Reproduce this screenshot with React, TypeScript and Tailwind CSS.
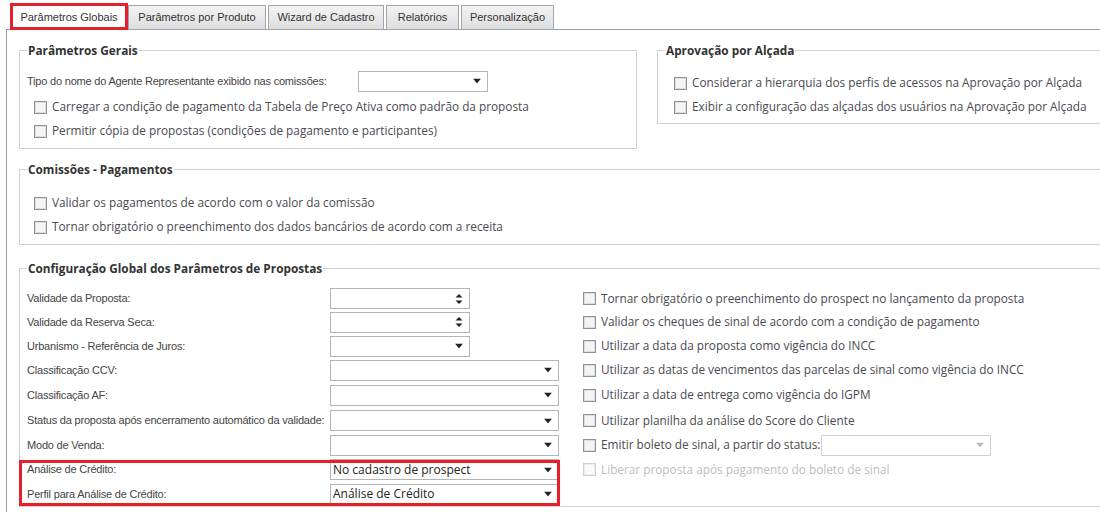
import React from "react";

const RED = "border-[#e5202a]";

const TABS = [
  { label: "Parâmetros Globais", w: "w-[114px]", active: true },
  { label: "Parâmetros por Produto", w: "w-[138px]" },
  { label: "Wizard de Cadastro", w: "w-[116px]" },
  { label: "Relatórios", w: "w-[73px]" },
  { label: "Personalização", w: "w-[93px]" },
];

function Box({ disabled }: { disabled?: boolean }) {
  return (
    <span
      className={
        "w-[13px] h-[13px] shrink-0 border " +
        (disabled
          ? "border-[#d0d0d0] bg-[#fafafa] shadow-[inset_0_0_0_1px_#ededed]"
          : "border-[#8f8f96] bg-[#f5f5f5] shadow-[inset_0_0_0_1px_#dedede]")
      }
    />
  );
}

function Check({
  label,
  disabled,
  children,
}: {
  label: string;
  disabled?: boolean;
  children?: React.ReactNode;
}) {
  return (
    <div className="flex items-center h-6">
      <Box disabled={disabled} />
      <span
        className={
          "ml-[5px] font-['Open_Sans',sans-serif] text-[11.8px] whitespace-nowrap " +
          (disabled ? "text-[#bdbdc2]" : "text-[#4a4a52]")
        }
      >
        {label}
      </span>
      {children}
    </div>
  );
}

function Arrow({ light }: { light?: boolean }) {
  return (
    <svg width="8" height="5" viewBox="0 0 8 5" className="absolute right-[6px] top-1/2 -translate-y-1/2">
      <path d="M0 0h8L4 5z" fill={light ? "#b8b8b8" : "#222"} />
    </svg>
  );
}

function Select({
  value,
  className,
  disabled,
}: {
  value?: string;
  className: string;
  disabled?: boolean;
}) {
  return (
    <div
      className={
        "relative h-[21px] bg-white border flex items-center pl-[2px] " +
        (disabled ? "border-[#d2d2d6] " : "border-[#b4b4bb] ") +
        className
      }
    >
      {value && (
        <span className="font-['Open_Sans',sans-serif] text-[12px] text-[#222]">{value}</span>
      )}
      <Arrow light={disabled} />
    </div>
  );
}

function Spinner() {
  return (
    <div className="relative h-[21px] w-[140px] bg-white border border-[#b4b4bb]">
      <svg width="8" height="12" viewBox="0 0 8 12" className="absolute right-[6px] top-1/2 -translate-y-1/2">
        <path d="M0.5 4.5L4 1L7.5 4.5z" fill="#222" />
        <path d="M0.5 7.5h7L4 11z" fill="#222" />
      </svg>
    </div>
  );
}

function Fieldset({
  title,
  className,
  children,
}: {
  title: string;
  className?: string;
  children: React.ReactNode;
}) {
  return (
    <fieldset className={"border border-[#cfcfd4] " + (className ?? "")}>
      <legend className="ml-[7px] px-[1px] leading-4 font-['Open_Sans',sans-serif] font-bold text-[11.8px] text-[#333]">
        {title}
      </legend>
      {children}
    </fieldset>
  );
}

const LEFT_ROWS: { label: string; kind: "spin" | "short" | "long" | "value"; value?: string }[] = [
  { label: "Validade da Proposta:", kind: "spin" },
  { label: "Validade da Reserva Seca:", kind: "spin" },
  { label: "Urbanismo - Referência de Juros:", kind: "short" },
  { label: "Classificação CCV:", kind: "long" },
  { label: "Classificação AF:", kind: "long" },
  { label: "Status da proposta após encerramento automático da validade:", kind: "long" },
  { label: "Modo de Venda:", kind: "long" },
  { label: "Análise de Crédito:", kind: "value", value: "No cadastro de prospect" },
  { label: "Perfil para Análise de Crédito:", kind: "value", value: "Análise de Crédito" },
];

const RIGHT_ROWS = [
  "Tornar obrigatório o preenchimento do prospect no lançamento da proposta",
  "Validar os cheques de sinal de acordo com a condição de pagamento",
  "Utilizar a data da proposta como vigência do INCC",
  "Utilizar as datas de vencimentos das parcelas de sinal como vigência do INCC",
  "Utilizar a data de entrega como vigência do IGPM",
  "Utilizar planilha da análise do Score do Cliente",
];

export default function App() {
  return (
    <div className="w-[1100px] h-[512px] overflow-hidden bg-white font-['Liberation_Sans',sans-serif] text-[11px] tracking-[-0.2px] text-[#444] pt-[5px]">
      {/* Tabs */}
      <div className="relative z-10 flex gap-[2px] ml-[12px] -mb-px">
        {TABS.map((t) => (
          <div key={t.label} className="relative">
            <div
              className={
                "h-[25px] flex items-center justify-center border border-[#a3a3ad] text-[#333] whitespace-nowrap tracking-normal " +
                t.w +
                (t.active
                  ? " bg-white border-b-white"
                  : " bg-gradient-to-b from-[#f3f3f3] to-[#dedede]")
              }
            >
              {t.label}
            </div>
            {t.active && (
              <div className={"absolute -left-[2px] -right-[2px] -top-[2px] bottom-0 border-[3px] " + RED} />
            )}
          </div>
        ))}
      </div>

      {/* Panel */}
      <div className="ml-[6px] w-[1130px] border-l border-t border-[#9c9ca8] pl-[12px] pt-[12px] h-[600px] tracking-normal">
        <div className="flex gap-[20px] items-start">
          <Fieldset title="Parâmetros Gerais" className="w-[618px]">
            <div className="px-[7px] pb-[5px]">
              <div className="flex items-center h-[22px] mt-[12px]">
                <span className="w-[331px] whitespace-nowrap tracking-[-0.2px]">
                  Tipo do nome do Agente Representante exibido nas comissões:
                </span>
                <Select className="w-[130px]" />
              </div>
              <div className="pl-[7px] mt-[3px]">
                <Check label="Carregar a condição de pagamento da Tabela de Preço Ativa como padrão da proposta" />
                <Check label="Permitir cópia de propostas (condições de pagamento e participantes)" />
              </div>
            </div>
          </Fieldset>
          <Fieldset title="Aprovação por Alçada" className="flex-1">
            <div className="pl-[16px] pb-[4px] mt-[13px]">
              <Check label="Considerar a hierarquia dos perfis de acessos na Aprovação por Alçada" />
              <Check label="Exibir a configuração das alçadas dos usuários na Aprovação por Alçada" />
            </div>
          </Fieldset>
        </div>

        <Fieldset title="Comissões - Pagamentos" className="mt-[12px]">
          <div className="pl-[14px] pb-[5px] mt-[14px]">
            <Check label="Validar os pagamentos de acordo com o valor da comissão" />
            <Check label="Tornar obrigatório o preenchimento dos dados bancários de acordo com a receita" />
          </div>
        </Fieldset>

        <Fieldset title="Configuração Global dos Parâmetros de Propostas" className="mt-[15px]">
          <div className="relative ml-[7px] mt-[11px] grid grid-cols-[303px_229px_1fr] grid-rows-[23px_24px_24px_24px_26px_25px_24px_25px_24px] items-center">
            {LEFT_ROWS.map((r, i) => (
              <React.Fragment key={r.label}>
                <span className="col-start-1 whitespace-nowrap tracking-[-0.2px]" style={{ gridRow: i + 1 }}>
                  {r.label}
                </span>
                <div className="col-start-2" style={{ gridRow: i + 1 }}>
                  {r.kind === "spin" && <Spinner />}
                  {r.kind === "short" && <Select className="w-[140px]" />}
                  {r.kind === "long" && <Select className="w-[229px]" />}
                  {r.kind === "value" && <Select className="w-[229px]" value={r.value} />}
                </div>
              </React.Fragment>
            ))}
            {RIGHT_ROWS.map((label, i) => (
              <div key={label} className="col-start-3 pl-[24px]" style={{ gridRow: i + 1 }}>
                <Check label={label} />
              </div>
            ))}
            <div className="col-start-3 row-start-7 pl-[24px]">
              <Check label="Emitir boleto de sinal, a partir do status:">
                <Select className="w-[170px] ml-[1px]" disabled />
              </Check>
            </div>
            <div className="col-start-3 row-start-8 pl-[24px]">
              <Check label="Liberar proposta após pagamento do boleto de sinal" disabled />
            </div>
            <div className="relative col-start-1 col-span-2 row-start-8 row-span-2 self-stretch">
              <div className={"absolute -left-[8px] -right-[1px] top-[3px] bottom-0 border-[3px] " + RED} />
            </div>
          </div>
        </Fieldset>
      </div>
    </div>
  );
}
